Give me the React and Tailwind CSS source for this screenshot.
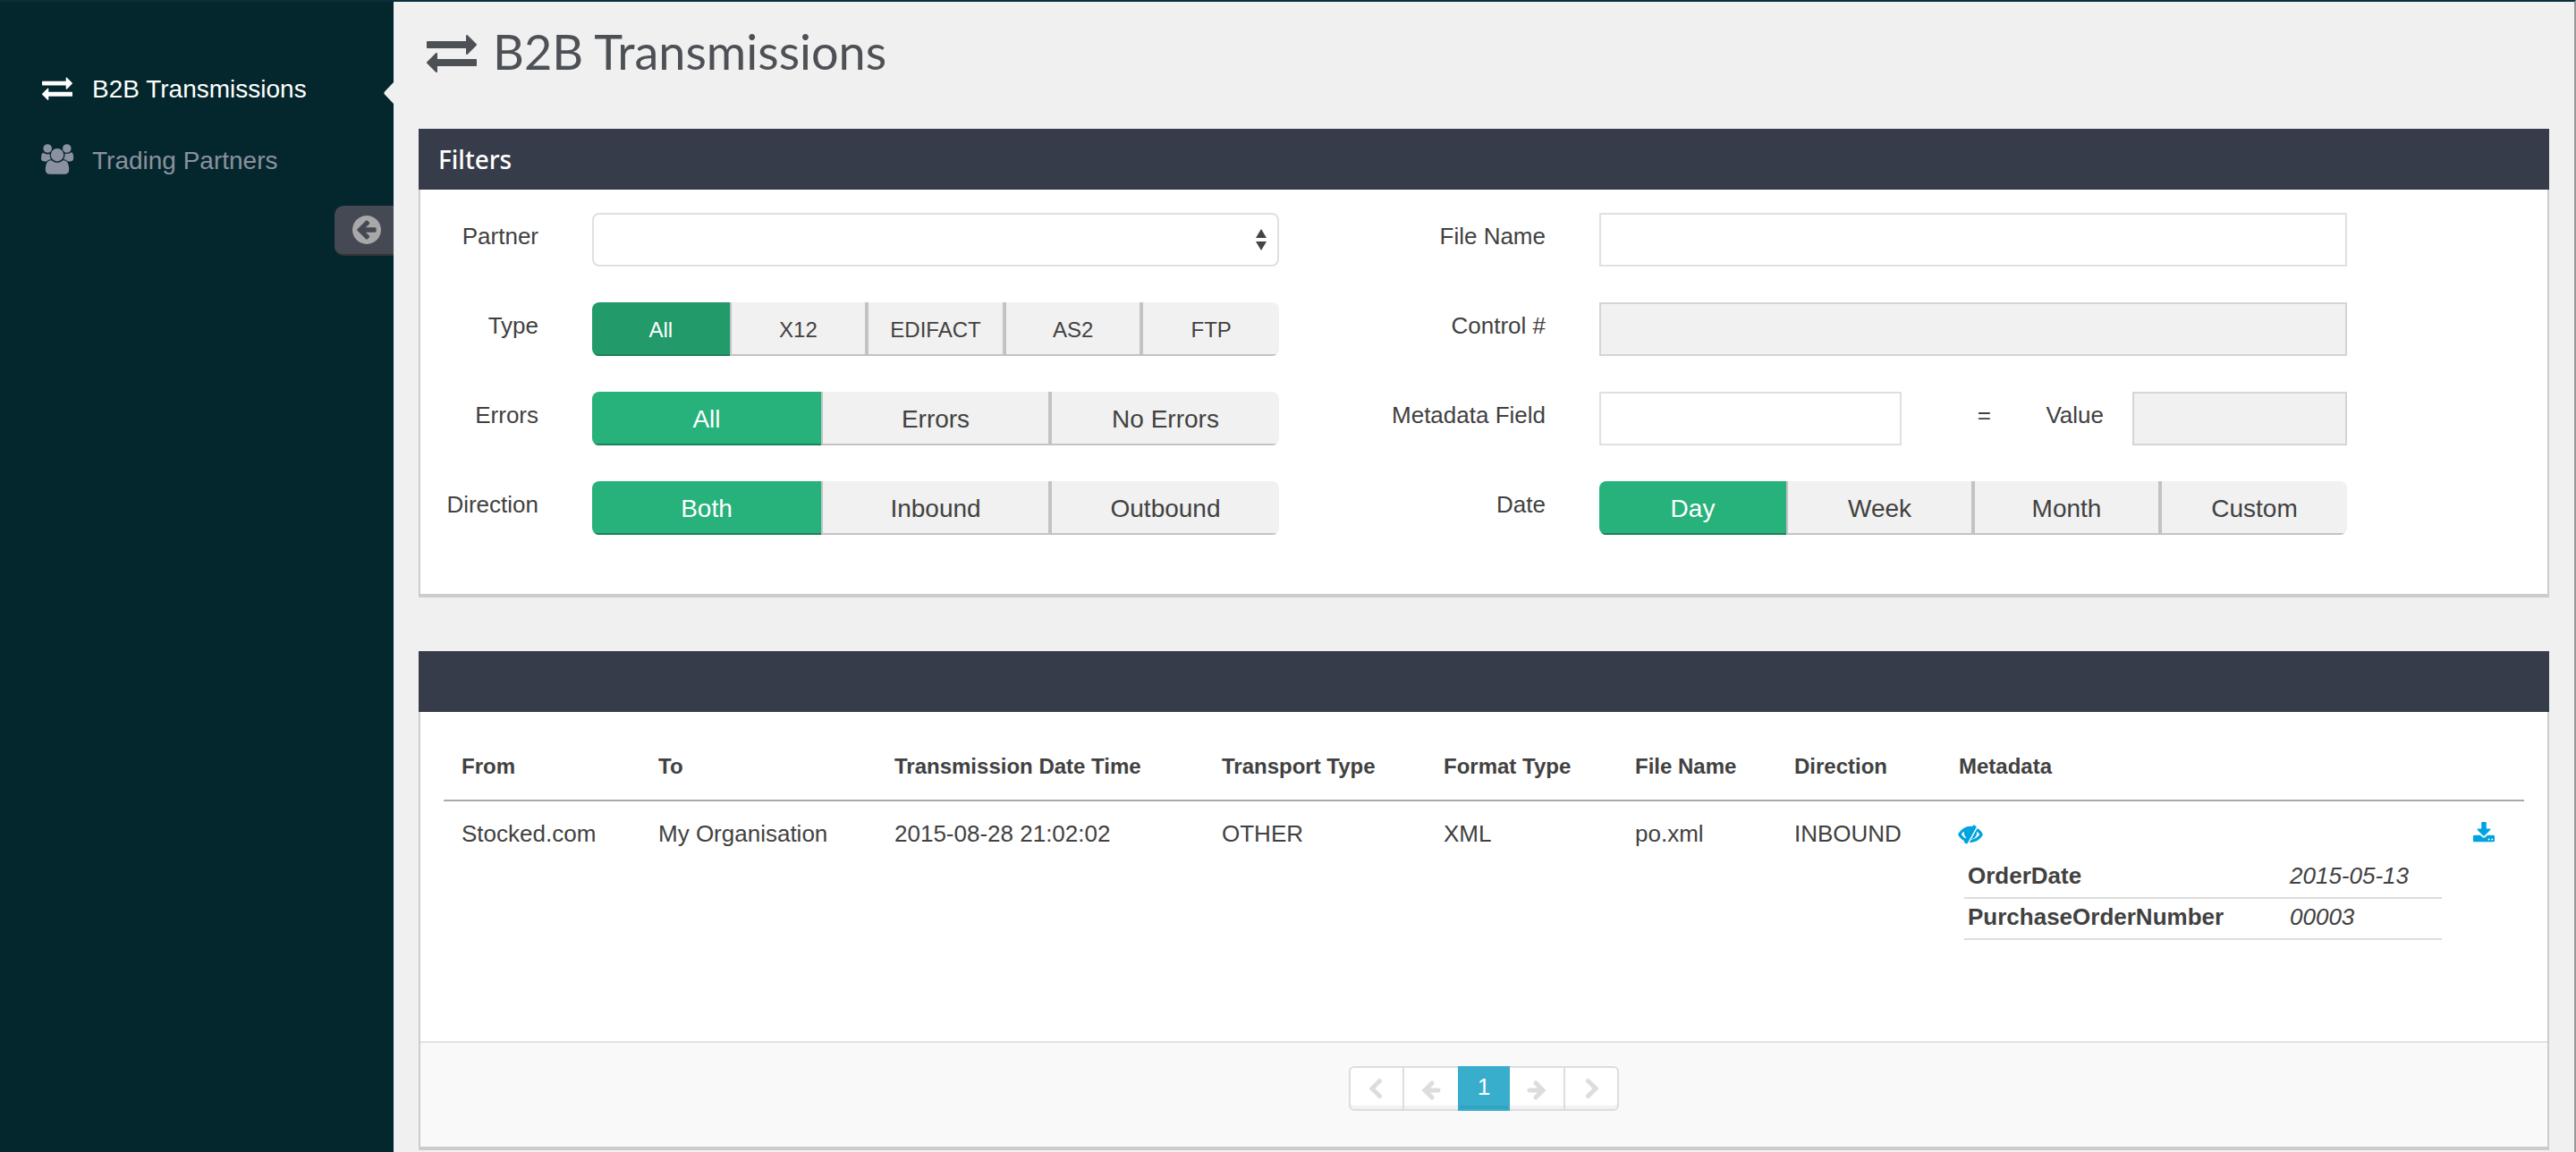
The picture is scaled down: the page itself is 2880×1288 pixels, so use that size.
import React, { useState } from 'react';

const ICONS = {
  exchange: {
    box: '0 0 1792 1792',
    d: 'M1792 1184v192q0 13-9.5 22.5t-22.5 9.5h-1376v192q0 13-9.5 22.5t-22.5 9.5q-12 0-24-10l-319-320q-9-9-9-22 0-14 9-23l320-320q9-9 23-9 13 0 22.5 9.5t9.5 22.5v192h1376q13 0 22.5 9.5t9.5 22.5zm0-544q0 14-9 23l-320 320q-9 9-23 9-13 0-22.5-9.5t-9.5-22.5v-192h-1376q-13 0-22.5-9.5t-9.5-22.5v-192q0-13 9.5-22.5t22.5-9.5h1376v-192q0-14 9-23t23-9q12 0 24 10l319 319q9 9 9 23z',
  },
  users: {
    box: '0 0 1920 1792',
    d: 'M593 896q-162 5-265 128h-134q-82 0-138-40.5t-56-118.5q0-353 124-353 6 0 43.5 21t97.5 42.5 119 21.5q67 0 133-23-5 37-5 66 0 159 90 283zm1071 637q0 120-73 189.5t-194 69.5h-874q-121 0-194-69.5t-73-189.5q0-53 3.5-103.5t14-109 26.5-108.5 43-97.5 62-81 85.5-53.5 111.5-20q10 0 43 21.5t73 48 107 48 135 21.5 135-21.5 107-48 73-48 43-21.5q61 0 111.5 20t85.5 53.5 62 81 43 97.5 26.5 108.5 14 109 3.5 103.5zm-1024-1277q0 106-75 181t-181 75-181-75-75-181 75-181 181-75 181 75 75 181zm704 384q0 159-112.5 271.5t-271.5 112.5-271.5-112.5-112.5-271.5 112.5-271.5 271.5-112.5 271.5 112.5 112.5 271.5zm576 225q0 78-56 118.5t-138 40.5h-134q-103-123-265-128 90-124 90-283 0-29-5-66 66 23 133 23 59 0 119-21.5t97.5-42.5 43.5-21q124 0 124 353zm-128-609q0 106-75 181t-181 75-181-75-75-181 75-181 181-75 181 75 75 181z',
  },
  circleLeft: {
    box: '128 128 1536 1536',
    d: 'M1408 960v-128q0-26-19-45t-45-19h-502l189-189q19-19 19-45t-19-45l-91-91q-18-18-45-18t-45 18l-362 362-91 91q-18 18-18 45t18 45l91 91 362 362q18 18 45 18t45-18l91-91q18-18 18-45t-18-45l-189-189h502q26 0 45-19t19-45zm256-64q0 209-103 385.5t-279.5 279.5-385.5 103-385.5-103-279.5-279.5-103-385.5 103-385.5 279.5-279.5 385.5-103 385.5 103 279.5 279.5 103 385.5z',
  },
  eyeSlash: {
    box: '0 0 1792 1792',
    bold: 100,
    d: 'M555 1335l78-141q-87-63-136-159t-49-203q0-121 61-225-229 117-381 353 167 258 427 375zm389-759q0-20-14-34t-34-14q-125 0-214.5 89.5t-89.5 214.5q0 20 14 34t34 14 34-14 14-34q0-86 61-147t147-61q20 0 34-14t14-34zm363-191q0 7-1 9-106 189-316 567t-315 566l-49 89q-10 16-28 16-12 0-134-70-16-10-16-28 0-12 44-87-143-65-263.5-173t-208.5-245q-20-31-20-69t20-69q153-235 380-371t496-136q89 0 180 17l54-97q10-16 28-16 5 0 18 6t31 15.5 33 18.5 31.5 18.5 19.5 11.5q16 10 16 27zm37 447q0 139-79 253.5t-209 164.5l280-502q8 45 8 84zm448 128q0 35-20 69-39 64-109 145-150 172-347.5 267t-419.5 95l74-132q212-18 392.5-137t301.5-307q-115-179-282-294l63-112q95 64 182.5 153t144.5 184q20 34 20 69z',
  },
  download: {
    box: '0 0 1792 1792',
    d: 'M1344 1344q0-26-19-45t-45-19-45 19-19 45 19 45 45 19 45-19 19-45zm256 0q0-26-19-45t-45-19-45 19-19 45 19 45 45 19 45-19 19-45zm128-224v320q0 40-28 68t-68 28h-1472q-40 0-68-28t-28-68v-320q0-40 28-68t68-28h465l135 136q58 56 136 56t136-56l136-136h464q40 0 68 28t28 68zm-325-569q17 41-14 70l-448 448q-18 19-45 19t-45-19l-448-448q-31-29-14-70 17-39 59-39h256v-448q0-26 19-45t45-19h256q26 0 45 19t19 45v448h256q42 0 59 39z',
  },
};

function Icon({ name, className }) {
  const icon = ICONS[name];
  return (
    <svg
      viewBox={icon.box}
      className={`shrink-0 ${className}`}
      fill="currentColor"
      stroke={icon.bold ? 'currentColor' : 'none'}
      strokeWidth={icon.bold}
      overflow="visible"
      aria-hidden="true"
    >
      <path d={icon.d} />
    </svg>
  );
}

function StrokeIcon({ d, className }) {
  return (
    <svg viewBox="0 0 24 24" className={className} fill="none" stroke="currentColor" strokeWidth="5" strokeLinecap="round" strokeLinejoin="miter" aria-hidden="true">
      <path d={d} />
    </svg>
  );
}

function Panel({ title, children }) {
  return (
    <section className="border-x-2 border-b-4 border-[#cccccc] bg-white">
      <header className="-mx-0.5 h-[68px] bg-[#363c4a] px-[22px] font-['Noto_Sans','Open_Sans',sans-serif] text-[28px] leading-[68px] font-medium text-white">
        {title && <h2>{title}</h2>}
      </header>
      {children}
    </section>
  );
}

function Label({ htmlFor, id, children }) {
  return (
    <label htmlFor={htmlFor} id={id} className="pt-2 text-right text-[26px] leading-9 whitespace-nowrap">
      {children}
    </label>
  );
}

function Segments({ labelId, options, small, dark }) {
  const [active, setActive] = useState(options[0]);
  return (
    <div
      role="group"
      aria-labelledby={labelId}
      className={`grid h-[60px] auto-cols-fr grid-flow-col overflow-hidden rounded-lg ${small ? 'text-2xl' : 'text-[28px]'}`}
    >
      {options.map((option, i) => {
        const tone =
          option === active
            ? `${dark ? 'bg-[#229a69]' : 'bg-[#27b17b]'} border-[#1c8058] text-white`
            : `bg-[#f1f1f1] border-[#c3c3c3] ${i > 0 ? 'border-l-2' : ''} ${i < options.length - 1 ? 'border-r-2' : ''}`;
        return (
          <button
            key={option}
            type="button"
            aria-pressed={option === active}
            onClick={() => setActive(option)}
            className={`min-w-0 border-b-2 pt-[3px] ${tone}`}
          >
            {option}
          </button>
        );
      })}
    </div>
  );
}

const inputClass =
  'block h-[60px] w-full min-w-0 border-2 border-[#e0e0e0] bg-white px-3 text-[26px] disabled:border-[#d5d5d5] disabled:bg-[#f1f1f1]';

function Filters() {
  return (
    <Panel title="Filters">
      <form className="grid grid-cols-[132fr_768fr_238fr_836fr_164fr] gap-x-[60px] gap-y-10 pt-[26px] pb-[66px]">
        <Label htmlFor="partner">Partner</Label>
        <div className="relative">
          <select id="partner" className="block h-[60px] w-full appearance-none rounded-lg border-2 border-[#e0e0e0] bg-white px-3 text-[26px]">
            <option value=""></option>
          </select>
          <svg viewBox="0 0 12 24" className="pointer-events-none absolute top-[18px] right-[14px] h-6 w-3" fill="#444444" aria-hidden="true">
            <path d="M6 0l6 10H0zM6 24L0 14h12z" />
          </svg>
        </div>
        <Label htmlFor="file-name">File Name</Label>
        <input id="file-name" type="text" className={inputClass} />
        <span />

        <Label id="type-label">Type</Label>
        <Segments labelId="type-label" options={['All', 'X12', 'EDIFACT', 'AS2', 'FTP']} small dark />
        <Label htmlFor="control">Control #</Label>
        <input id="control" type="text" disabled className={inputClass} />
        <span />

        <Label id="errors-label">Errors</Label>
        <Segments labelId="errors-label" options={['All', 'Errors', 'No Errors']} />
        <Label htmlFor="meta-field">Metadata Field</Label>
        <div className="grid grid-cols-[338fr_100fr_126fr_272fr]">
          <input id="meta-field" type="text" className={inputClass} />
          <span className="pt-2 text-right text-[26px] leading-9">=</span>
          <Label htmlFor="meta-value">Value</Label>
          <div className="pl-8">
            <input id="meta-value" type="text" disabled className={inputClass} />
          </div>
        </div>
        <span />

        <Label id="direction-label">Direction</Label>
        <Segments labelId="direction-label" options={['Both', 'Inbound', 'Outbound']} />
        <Label id="date-label">Date</Label>
        <Segments labelId="date-label" options={['Day', 'Week', 'Month', 'Custom']} />
        <span />
      </form>
    </Panel>
  );
}

const COLUMNS = [
  ['From', 'w-[220px]'],
  ['To', 'w-[264px]'],
  ['Transmission Date Time', 'w-[366px]'],
  ['Transport Type', 'w-[248px]'],
  ['Format Type', 'w-[214px]'],
  ['File Name', 'w-[178px]'],
  ['Direction', 'w-[184px]'],
  ['Metadata', ''],
  ['', 'w-[78px]'],
];

const ROW = ['Stocked.com', 'My Organisation', '2015-08-28 21:02:02', 'OTHER', 'XML', 'po.xml', 'INBOUND'];

const METADATA = [
  ['OrderDate', '2015-05-13'],
  ['PurchaseOrderNumber', '00003'],
];

function Transmissions() {
  return (
    <Panel>
      <div className="min-h-[368px] px-[26px] pt-6">
        <table className="w-full table-fixed text-left text-[26px] leading-9">
          <thead>
            <tr className="h-[75px] border-b-2 border-[#aaaaaa] text-2xl">
              {COLUMNS.map(([name, width]) => (
                <th key={name} scope="col" className={`pl-5 font-bold whitespace-nowrap ${width}`}>
                  {name}
                </th>
              ))}
            </tr>
          </thead>
          <tbody>
            <tr className="align-top">
              {ROW.map((value) => (
                <td key={value} className="pt-[18px] pl-5 whitespace-nowrap">
                  {value}
                </td>
              ))}
              <td className="pt-[18px] pl-5">
                <button type="button" aria-label="Hide metadata" className="flex h-9 items-center text-[#00a3e0]">
                  <Icon name="eyeSlash" className="size-[26px]" />
                </button>
                <table className="mt-2 mr-[14px] ml-1.5 w-[534px]">
                  <tbody>
                    {METADATA.map(([key, value]) => (
                      <tr key={key} className="h-[46px] border-b-2 border-[#dddddd]">
                        <th scope="row" className="w-[360px] pb-1 pl-1 font-bold">
                          {key}
                        </th>
                        <td className="pb-1 pl-1 italic">{value}</td>
                      </tr>
                    ))}
                  </tbody>
                </table>
              </td>
              <td className="pt-[18px] pl-5">
                <button type="button" aria-label="Download" className="flex h-9 items-center text-[#00a3e0]">
                  <Icon name="download" className="size-[26px]" />
                </button>
              </td>
            </tr>
          </tbody>
        </table>
      </div>
      <footer className="flex justify-center border-t-2 border-[#e0e0e0] bg-[#f9f9f9] pt-[26px] pb-10">
        <Pagination />
      </footer>
    </Panel>
  );
}

const pageButton =
  'flex h-[50px] items-center justify-center border-y-2 border-[#dddddd] bg-white text-[#dddddd] shadow-[inset_0_-4px_0_#f2f2f2]';

function Pagination() {
  return (
    <nav aria-label="Pages" className="flex">
      <button type="button" aria-label="First page" className={`${pageButton} w-[62px] rounded-l-md border-x-2`}>
        <StrokeIcon d="M15.5 3.5L7 12l8.5 8.5" className="size-6" />
      </button>
      <button type="button" aria-label="Previous page" className={`${pageButton} w-[60px] pt-[3px]`}>
        <StrokeIcon d="M13 4L5 12l8 8M6 12h14" className="size-6" />
      </button>
      <button
        type="button"
        aria-current="page"
        className="h-[50px] w-[58px] border-2 border-[#38adcc] bg-[#38adcc] pb-1 text-[26px] leading-none text-white shadow-[inset_0_-4px_0_#33a3c1]"
      >
        1
      </button>
      <button type="button" aria-label="Next page" className={`${pageButton} w-[62px] border-r-2 pt-[3px]`}>
        <StrokeIcon d="M11 4l8 8-8 8M18 12H4" className="size-6" />
      </button>
      <button type="button" aria-label="Last page" className={`${pageButton} w-[60px] rounded-r-md border-r-2`}>
        <StrokeIcon d="M8.5 3.5L17 12l-8.5 8.5" className="size-6" />
      </button>
    </nav>
  );
}

function Sidebar() {
  return (
    <aside className="w-[440px] shrink-0 bg-[#03272c] pt-[58px]">
      <nav className="text-[28px]">
        <a href="#transmissions" aria-current="page" className="flex h-20 items-center pl-[46px] text-white">
          <Icon name="exchange" className="mb-1 h-[34px] w-9" />
          <span className="ml-[21px] grow">B2B Transmissions</span>
          <svg viewBox="0 0 11 24" className="mt-2 h-6 w-[11px]" fill="#f0f0f0" aria-hidden="true">
            <path d="M11 0v24L1 13.5q-1.2-1.5 0-3z" />
          </svg>
        </a>
        <a href="#partners" className="flex h-20 items-center pl-[46px] text-[#8b91a0]">
          <Icon name="users" className="mb-1 h-[34px] w-9" />
          <span className="ml-[21px]">Trading Partners</span>
        </a>
      </nav>
      <button
        type="button"
        aria-label="Collapse menu"
        className="mt-[10px] ml-auto flex h-14 w-[66px] items-center rounded-l-[10px] border-b-2 border-[#353534] bg-[#444954] pl-5 text-[#a8a8a8]"
      >
        <Icon name="circleLeft" className="size-8" />
      </button>
    </aside>
  );
}

export default function App() {
  return (
    <div className="flex min-h-screen border-t-2 border-r-2 border-t-[#0b303b] border-r-[#999999] bg-[#f0f0f0] font-['Liberation_Sans',Arial,sans-serif] text-[#414141]">
      <Sidebar />
      <main className="min-w-0 flex-1 px-7">
        <h1 className="flex h-[142px] items-start gap-[18px] pt-5 pl-[9px] font-[Lato,sans-serif] text-[54px] leading-[72px] font-normal text-[#4d5156]">
          <Icon name="exchange" className="mt-2 size-14" />
          B2B Transmissions
        </h1>
        <Filters />
        <div className="mt-[60px]">
          <Transmissions />
        </div>
      </main>
    </div>
  );
}
